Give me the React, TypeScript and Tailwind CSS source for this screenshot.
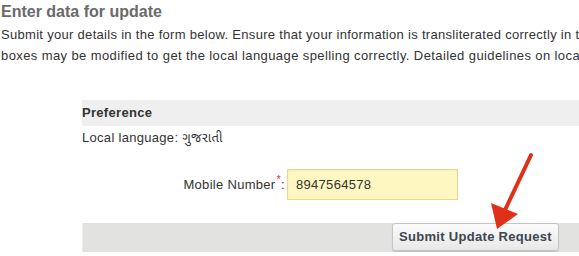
export default function App() {
  return (
    <div className="relative w-[579px] h-[256px] overflow-hidden bg-white font-['Liberation_Sans',Arial,sans-serif] tracking-[0.3px]">
      <div className="pl-[1px] pt-[1px]">
        <h2 className="text-[16px] font-bold text-[#6a6a6a] leading-[22px] tracking-normal">Enter data for update</h2>
        <p className="mt-[1px] text-[13px] leading-[21px] text-[#333] whitespace-nowrap">
          Submit your details in the form below. Ensure that your information is transliterated correctly in the
        </p>
        <p className="text-[13px] leading-[21px] text-[#333] whitespace-nowrap tracking-[0.4px]">
          boxes may be modified to get the local language spelling correctly. Detailed guidelines on local language
        </p>
      </div>

      <div className="ml-[82px] mt-[34px]">
        <div className="h-[26px] bg-[#efefef] flex items-center">
          <span className="text-[13px] font-bold text-[#333]">Preference</span>
        </div>
        <div className="mt-[2px] text-[13px] leading-[20px] text-[#333]">
          Local language: <span className="font-['Noto_Sans_Gujarati','Noto_Sans',sans-serif]">ગુજરાતી</span>
        </div>

        <div className="mt-[20px] flex items-center">
          <div className="w-[203px] flex justify-end items-center text-[13px] text-[#333]">
            Mobile Number<span className="text-[#e03030] text-[11px] relative -top-[5px] ml-[1px]">*</span>:
          </div>
          <div className="ml-[2px] w-[171px] h-[31px] bg-[#fff7c2] border border-[#e6d890] flex items-center pl-[8px] text-[13px] text-[#333] shadow-[inset_0_1px_2px_rgba(0,0,0,0.06)]">
            8947564578
          </div>
        </div>

        <div className="mt-[23px] h-[29px] bg-[#e2e2e0] border-l border-[#ececea] flex justify-end pr-[20px]">
          <button className="h-[28px] px-[6px] rounded-[3px] border border-[#c4c4c4] bg-gradient-to-b from-[#fbfbfb] to-[#e8e8e8] text-[13px] font-bold text-[#3c4650] shadow-[0_1px_1px_rgba(0,0,0,0.15)]">
            Submit Update Request
          </button>
        </div>
      </div>

      <svg className="absolute left-0 top-0" width="579" height="256" viewBox="0 0 579 256">
        <line x1="531" y1="155" x2="505" y2="210" stroke="#e0301a" strokeWidth="4" strokeLinecap="round" />
        <polygon points="491,203 518,214 497,229" fill="#e0301a" />
      </svg>
    </div>
  );
}
